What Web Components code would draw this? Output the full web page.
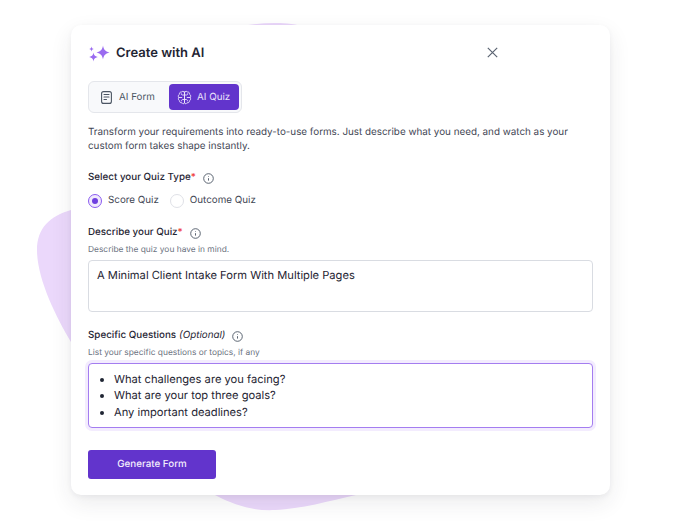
<!doctype html>
<html>
<head>
<meta charset="utf-8">
<title>Create with AI</title>
<style>
  html, body { margin: 0; background: #fff; }
  body { width: 682px; height: 521px; overflow: hidden; font-family: Inter, "Liberation Sans", sans-serif; text-rendering: geometricPrecision; }
</style>
</head>
<body>
<ai-stage>
  <ai-dialog>
    <ai-tabs></ai-tabs>
    <p slot="intro">Transform your requirements into ready-to-use forms. Just describe what you need, and watch as your custom form takes shape instantly.</p>
    <ai-field slot="type" required label="Select your Quiz Type">
      <ai-radio checked>Score Quiz</ai-radio>
      <ai-radio>Outcome Quiz</ai-radio>
    </ai-field>
    <ai-field slot="describe" required label="Describe your Quiz" hint="Describe the quiz you have in mind.">
      <ai-box>A Minimal Client Intake Form With Multiple Pages</ai-box>
    </ai-field>
    <ai-field slot="questions" label="Specific Questions" optional="(Optional)" hint="List your specific questions or topics, if any">
      <ai-box focused>
        <ul style="margin:0;padding:0 0 0 17px;list-style:disc">
          <li>What challenges are you facing?</li>
          <li>What are your top three goals?</li>
          <li>Any important deadlines?</li>
        </ul>
      </ai-box>
    </ai-field>
    <ai-button slot="action">Generate Form</ai-button>
  </ai-dialog>
</ai-stage>

<script>
const infoIcon = `<svg width="11" height="11" viewBox="0 0 11 11" fill="none" stroke="#4b5563" stroke-width=".9"><circle cx="5.500" cy="5.500" r="4.800"/><path d="M5.500 5.200v2.400M5.500 3.200v.6"/></svg>`

// half of the brain, drawn twice
const brainHalf = `<path d="M7.500 2.200C6.900 1.200 5.200 1 4.400 2 3 1.900 2.200 3 2.500 4.200 1.200 4.800.9 6.600 1.900 7.500 1 8.500 1.300 10.300 2.600 10.800 2.500 12.200 3.700 13.200 5 12.800 5.600 13.900 7 14 7.500 13V2.200Z"/><path d="M7.500 5H5.500C4.700 5 4.200 4.500 4.200 3.700M1.900 7.500H4.800M7.500 9.500H5.800C5 9.500 4.500 10 4.500 10.800"/>`

class AiStage extends HTMLElement {
  constructor() {
    super()
    this.attachShadow({ mode: 'open' })
    this.shadowRoot.innerHTML = `
      <style>
        :host { display: block; position: relative; width: 682px; height: 521px; padding: 25px 0 0 71px; box-sizing: border-box; }
        svg { position: absolute; left: 0; top: 0; }
        ::slotted(*) { position: relative; }
      </style>
      <svg width="682" height="521" viewBox="0 0 682 521">
        <path fill="#ebd8fb" d="M71 210 C50 216 37 228 37 250 C37 278 55 315 71 342 L215 495 C236 506 254 511 275 510 C300 509 330 501 356 495 L500 300 L400 100 C360 50 320 24 280 23 C250 22 220 30 200 40 Z"/>
      </svg>
      <slot></slot>`
  }
}

class AiDialog extends HTMLElement {
  constructor() {
    super()
    this.attachShadow({ mode: 'open' })
    this.shadowRoot.innerHTML = `
      <style>
        :host { display: flex; flex-direction: column; width: 539px; height: 470px; box-sizing: border-box; padding: 0 17px; background: #fff; border-radius: 10px; box-shadow: 0 2px 5px rgba(40,40,60,.05), 0 8px 22px rgba(40,40,60,.09); }
        header { display: flex; align-items: center; height: 56px; gap: 6px; }
        h2 { margin: 0; font-size: 13px; line-height: 20px; font-weight: 600; color: #1f2533; flex: 1; }
        .close { margin-right: 95px; width: 11px; height: 11px; display: block; margin-top: -2px; }
        ::slotted(p) { margin: 12px 0 0; font-size: 9.850px; line-height: 14px; color: #3f4654; }
        ::slotted([slot=type]) { margin-top: 17px; }
        ::slotted([slot=describe]) { margin-top: 16px; }
        ::slotted([slot=questions]) { margin-top: 16px; }
        ::slotted([slot=action]) { margin-top: 22px; }
      </style>
      <header>
        <svg width="22" height="18" viewBox="0 0 22 18" fill="#9a6bf0">
          <path d="M15 1.500 C15.700 5.500 17 7.300 21.500 8.500 C17 9.700 15.700 11.500 15 15.500 C14.300 11.500 13 9.700 8.500 8.500 C13 7.300 14.300 5.500 15 1.500Z"/>
          <path d="M3.500 2.500 C3.800 4 4.300 4.600 6 5 C4.300 5.400 3.800 6 3.500 7.500 C3.200 6 2.700 5.400 1 5 C2.700 4.600 3.200 4 3.500 2.500Z"/>
          <path d="M5.500 8.500 C6 11.200 6.800 12.200 10 13 C6.800 13.800 6 14.800 5.500 17.500 C5 14.800 4.200 13.800 1 13 C4.200 12.200 5 11.200 5.500 8.500Z"/>
        </svg>
        <h2>Create with AI</h2>
        <svg class="close" viewBox="0 0 11 11" stroke="#5b6472" stroke-width="1.200" fill="none"><path d="M.8.8l9.400 9.400M10.200.8L.8 10.200"/></svg>
      </header>
      <slot></slot>
      <slot name="intro"></slot>
      <slot name="type"></slot>
      <slot name="describe"></slot>
      <slot name="questions"></slot>
      <slot name="action"></slot>`
  }
}

class AiTabs extends HTMLElement {
  constructor() {
    super()
    this.attachShadow({ mode: 'open' })
    this.shadowRoot.innerHTML = `
      <style>
        :host { display: inline-flex; align-self: flex-start; box-sizing: border-box; width: 154px; height: 32px; padding: 2px; background: #f8f9fb; border: 1px solid #e4e6eb; border-radius: 6px; }
        div { display: flex; align-items: center; font-size: 9.800px; font-weight: 400; border-radius: 4px; color: #4b5563; }
        .a { width: 78px; gap: 7px; padding-left: 10px; box-sizing: border-box; }
        .b { width: 70px; gap: 5px; padding-left: 8px; box-sizing: border-box; background: #6234cc; color: #e9e2fb; }
      </style>
      <div class="a">
        <svg width="11" height="13" viewBox="0 0 11 13" fill="none" stroke="#4b5563" stroke-width="1.100" stroke-linecap="round"><rect x=".6" y=".6" width="9.800" height="11.800" rx="2"/><path d="M3 3.500h5M3 6h5M3 8.500h2.500"/></svg>
        AI Form
      </div>
      <div class="b">
        <svg width="15" height="15" viewBox="0 0 15 15" fill="none" stroke="#ece6fb" stroke-width=".9" stroke-linecap="round" stroke-linejoin="round">${brainHalf}<g transform="matrix(-1 0 0 1 15 0)">${brainHalf}</g></svg>
        AI Quiz
      </div>`
  }
}

class AiField extends HTMLElement {
  constructor() {
    super()
    this.attachShadow({ mode: 'open' })
    const req = this.hasAttribute('required') ? '<span class="req">*</span>' : ''
    const opt = this.getAttribute('optional')
    const hint = this.getAttribute('hint')
    this.shadowRoot.innerHTML = `
      <style>
        :host { display: block; }
        .label { display: flex; align-items: center; font-size: 9.800px; line-height: 16px; font-weight: 500; color: #1f2533; }
        .req { color: #ef4444; }
        em { font-weight: 400; margin-left: 3px; }
        svg { margin-left: 7px; display: block; }
        .hint { font-size: 8.400px; line-height: 12px; color: #6b7280; margin-top: 3px; }
        .body { display: flex; margin-top: 4px; }
        .body.inline { gap: 11px; margin-top: 7px; }
      </style>
      <div class="label"><span>${this.getAttribute('label')}${req}</span>${opt ? `<em>${opt}</em>` : ''}${infoIcon}</div>
      ${hint ? `<div class="hint">${hint}</div>` : ''}
      <div class="body ${hint ? '' : 'inline'}"><slot></slot></div>`
  }
}

class AiRadio extends HTMLElement {
  constructor() {
    super()
    this.attachShadow({ mode: 'open' })
    this.shadowRoot.innerHTML = `
      <style>
        :host { display: inline-flex; align-items: center; gap: 6px; font-size: 9.800px; line-height: 16px; color: #3f4654; }
        i { box-sizing: border-box; width: 14px; height: 14px; border-radius: 50%; border: 1px solid #dfe1e7; display: flex; align-items: center; justify-content: center; }
        :host([checked]) i { border-color: #8b5cf0; background: #f1eafd; }
        :host([checked]) i::after { content: ''; width: 6px; height: 6px; border-radius: 50%; background: #6f3fe0; }
      </style>
      <i></i><slot></slot>`
  }
}

class AiBox extends HTMLElement {
  constructor() {
    super()
    this.attachShadow({ mode: 'open' })
    this.shadowRoot.innerHTML = `
      <style>
        :host { display: block; box-sizing: border-box; width: 505px; height: 52px; padding: 6px 8px; border: 1px solid #d9dce2; border-radius: 4px; background: #fff; font-size: 11.150px; line-height: 16.500px; color: #1f2533; }
        :host([focused]) { height: 65px; padding: 6.500px 8px; border-color: #a47df0; box-shadow: 0 0 0 3px #f3ecfe; }
      </style>
      <slot></slot>`
  }
}

class AiButton extends HTMLElement {
  constructor() {
    super()
    this.attachShadow({ mode: 'open' })
    this.shadowRoot.innerHTML = `
      <style>
        :host { display: flex; align-items: center; justify-content: center; align-self: flex-start; width: 128px; height: 29px; background: #6234cc; border-radius: 3px; color: #f2edfd; font-size: 9.800px; font-weight: 500; }
      </style>
      <slot></slot>`
  }
}

customElements.define('ai-stage', AiStage)
customElements.define('ai-dialog', AiDialog)
customElements.define('ai-tabs', AiTabs)
customElements.define('ai-field', AiField)
customElements.define('ai-radio', AiRadio)
customElements.define('ai-box', AiBox)
customElements.define('ai-button', AiButton)
</script>
</body>
</html>
